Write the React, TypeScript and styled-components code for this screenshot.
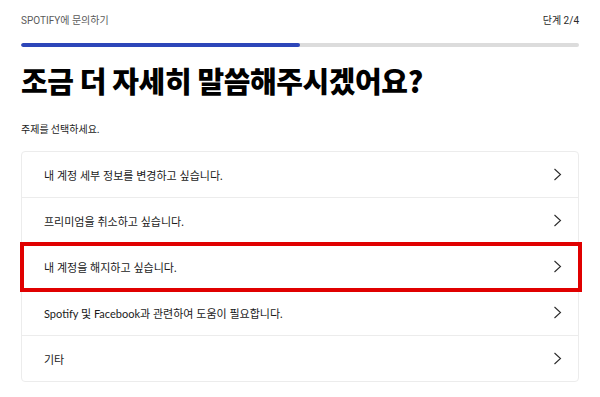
import React from "react";
import styled, { createGlobalStyle } from "styled-components";

const GlobalStyle = createGlobalStyle`
    html, body {
        margin: 0;
        padding: 0;
        background: #ffffff;
    }

    body {
        font-family: "Noto Sans CJK KR", "Noto Sans", sans-serif;
        color: #181818;
    }
`

const Page = styled.div`
    padding: 14px 21px 0;
`

const Header = styled.div`
    display: flex;
    justify-content: space-between;
    align-items: center;
    height: 14px;
    font-size: 10px;
    line-height: 14px;
`

const HeaderTitle = styled.span`
    color: #5a5a5a;
    font-family: Roboto, "Noto Sans CJK KR", sans-serif;
`

const StepLabel = styled.span`
    color: #2a2a2a;
    font-family: Roboto, "Noto Sans CJK KR", sans-serif;
`

const ProgressTrack = styled.div`
    margin-top: 15px;
    height: 4px;
    border-radius: 2px;
    background: #dcdcdc;
    overflow: hidden;
`

const ProgressFill = styled.div`
    height: 100%;
    border-radius: 2px;
    background: #2d46b9;
`

const Title = styled.h1`
    margin: 15px 0 0;
    font-size: 29px;
    line-height: 36px;
    font-weight: 900;
    letter-spacing: -0.4px;
    color: #000000;
`

const Subtitle = styled.p`
    margin: 24px 0 0;
    font-size: 10px;
    line-height: 14px;
    color: #222222;
`

const TopicList = styled.div`
    margin-top: 15px;
    border: 1px solid #ececec;
    border-radius: 4px;
    background: #ffffff;
`

const TopicRow = styled.div<{ $highlighted?: boolean }>`
    position: relative;
    display: flex;
    align-items: center;
    justify-content: space-between;
    height: 45px;
    padding: 0 16px 0 22px;
    font-size: 11px;
    color: #1a1a1a;

    & + & {
        border-top: 1px solid #ececec;
    }

    ${({ $highlighted }) => $highlighted && `
        &::after {
            content: "";
            position: absolute;
            z-index: 1;
            top: -2px;
            left: -2px;
            right: -4px;
            bottom: -3px;
            border: 4px solid #e00000;
            pointer-events: none;
        }
    `}
`

const TopicText = styled.span`
    font-family: Lato, "Noto Sans CJK KR", sans-serif;
`

const Chevron = () => (
    <svg width="9" height="13" viewBox="0 0 9 13" fill="none">
        <path d="M1.5 1 L7.5 6.5 L1.5 12" stroke="#2a2a2a" strokeWidth="1.1" />
    </svg>
);

const topics = [
    "내 계정 세부 정보를 변경하고 싶습니다.",
    "프리미엄을 취소하고 싶습니다.",
    "내 계정을 해지하고 싶습니다.",
    "Spotify 및 Facebook과 관련하여 도움이 필요합니다.",
    "기타",
];

const App = () => {
    const step = 2;
    const totalSteps = 4;

    return (
        <>
            <GlobalStyle />
            <Page>
                <Header>
                    <HeaderTitle>SPOTIFY에 문의하기</HeaderTitle>
                    <StepLabel>단계 {step}/{totalSteps}</StepLabel>
                </Header>
                <ProgressTrack>
                    <ProgressFill style={{ width: `${(step / totalSteps) * 100}%` }} />
                </ProgressTrack>
                <Title>조금 더 자세히 말씀해주시겠어요?</Title>
                <Subtitle>주제를 선택하세요.</Subtitle>
                <TopicList>
                    {topics.map((topic, i) => (
                        <TopicRow key={topic} $highlighted={i === 2}>
                            <TopicText>{topic}</TopicText>
                            <Chevron />
                        </TopicRow>
                    ))}
                </TopicList>
            </Page>
        </>
    );
};

export default App;
